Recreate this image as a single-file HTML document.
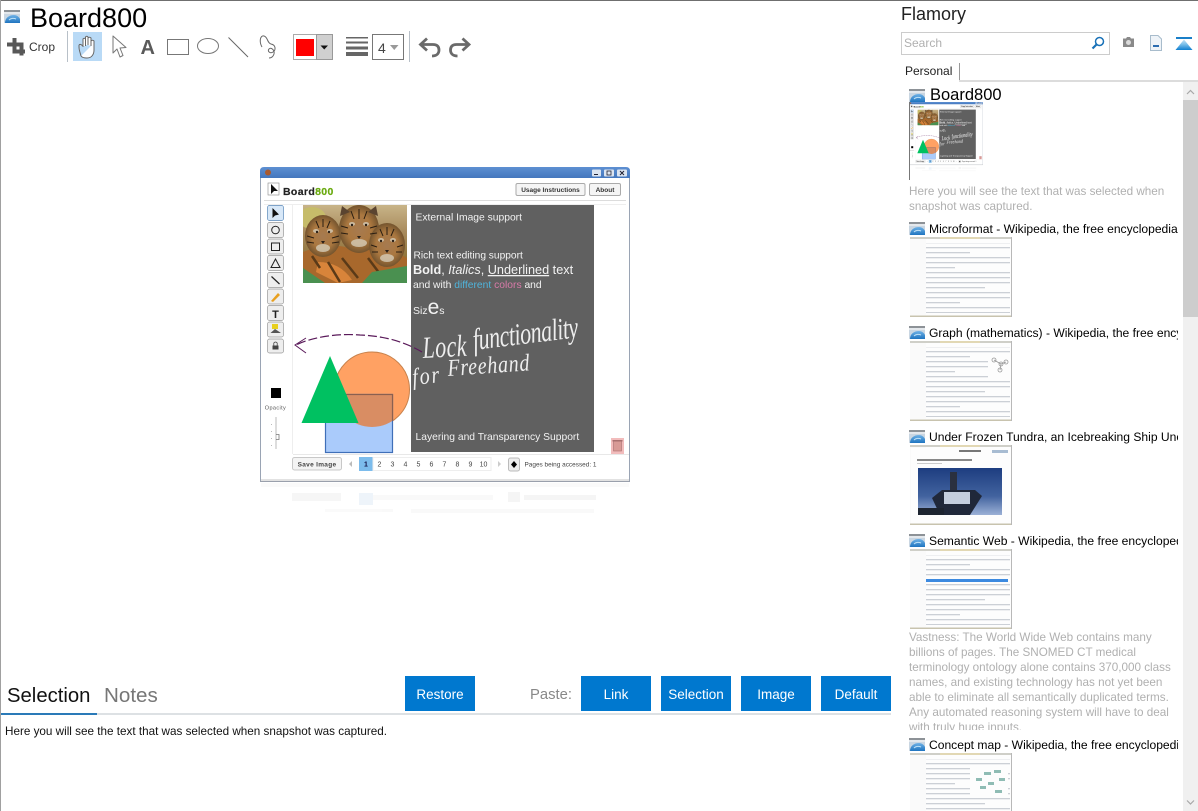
<!DOCTYPE html>
<html>
<head>
<meta charset="utf-8">
<title>Board800</title>
<style>
html,body{margin:0;padding:0;background:#fff;}
body{width:1198px;height:811px;position:relative;overflow:hidden;font-family:"Liberation Sans",sans-serif;color:#000;}
.a{position:absolute;white-space:nowrap;}
.btn{position:absolute;top:676px;width:70px;height:35px;background:#0078cf;color:#fff;font-size:13.5px;line-height:37px;text-align:center;}
.tt{position:absolute;left:929px;width:249px;overflow:hidden;white-space:nowrap;font-size:12.1px;line-height:16px;height:16px;color:#000;}
svg{position:absolute;left:0;top:0;}
</style>
</head>
<body>
<svg width="1198" height="811" viewBox="0 0 1198 811" xmlns="http://www.w3.org/2000/svg" font-family="Liberation Sans, sans-serif">
<defs>
<linearGradient id="icb" x1="0" y1="0" x2="0" y2="1"><stop offset="0" stop-color="#6fb2e6"/><stop offset="1" stop-color="#1f74c0"/></linearGradient>
<symbol id="ic" viewBox="0 0 16 14" overflow="visible">
  <rect x="0" y="0" width="16" height="13" fill="#c9d6e2"/>
  <rect x="0" y="0" width="16" height="2" fill="#8d9297"/>
  <rect x="0" y="2" width="16" height="2" fill="#e4e8ec"/>
  <path d="M1 13 C1 8 5 5 10 5 C13 5 15 7 16 9 V13 Z" fill="url(#icb)"/>
  <path d="M5 10 C7 8 10 8 12 9" stroke="#bfe2f8" stroke-width="1" fill="none"/>
</symbol>
<linearGradient id="tb" x1="0" y1="0" x2="0" y2="1"><stop offset="0" stop-color="#5d8fd2"/><stop offset="1" stop-color="#4477bd"/></linearGradient>
<linearGradient id="tg" x1="0" y1="0" x2="0" y2="1"><stop offset="0" stop-color="#c8b488"/><stop offset=".35" stop-color="#a88a5c"/><stop offset=".75" stop-color="#8a7034"/><stop offset="1" stop-color="#4b8a4a"/></linearGradient>
<radialGradient id="face"><stop offset="0" stop-color="#a67a50"/><stop offset=".6" stop-color="#ab7840"/><stop offset="1" stop-color="#74542e"/></radialGradient>
<linearGradient id="sk" x1="0" y1="0" x2="0" y2="1"><stop offset="0" stop-color="#1d3d80"/><stop offset=".6" stop-color="#42639f"/><stop offset="1" stop-color="#9bb0d6"/></linearGradient>
<linearGradient id="up" x1="0" y1="0" x2="0" y2="1"><stop offset="0" stop-color="#c8e4f6"/><stop offset=".45" stop-color="#7cc0ea"/><stop offset="1" stop-color="#0f7fd0"/></linearGradient>
<clipPath id="cc"><circle cx="372" cy="389.5" r="37.5"/></clipPath>
<clipPath id="tc"><rect x="303" y="205" width="104" height="78"/></clipPath>
<pattern id="ln" width="84" height="5" patternUnits="userSpaceOnUse"><rect width="84" height="1" fill="#ccd0d6"/><rect y="1" width="84" height="1" fill="#eeeff1"/></pattern>

<symbol id="wk" viewBox="0 0 102 80" overflow="hidden">
  <rect width="102" height="80" fill="#fdfdfd"/>
  <rect width="102" height="2" fill="#cfcfc8"/>
  <rect x="30" y="0" width="40" height="2" fill="#e2d8b4"/>
  <rect x="0" y="2" width="16" height="76" fill="#fafafa"/>
  <rect x="0" y="78.500" width="102" height="1.500" fill="#c8c3ae"/>
  <rect x="101" y="0" width="1" height="80" fill="#b8b8b8"/>
  <rect x="16" y="6" width="84" height="70" fill="url(#ln)"/>
  <rect x="60" y="14" width="40" height="6" fill="#fdfdfd"/>
  <rect x="45" y="29" width="55" height="6" fill="#fdfdfd"/>
  <rect x="75" y="49" width="25" height="6" fill="#fdfdfd"/>
  <rect x="50" y="64" width="50" height="6" fill="#fdfdfd"/>
</symbol>

<g id="shot">
  <rect x="260" y="167" width="370" height="316" fill="#fff"/>
  <path d="M260 178 V171 Q260 167 264 167 H626 Q630 167 630 171 V178 Z" fill="url(#tb)"/>
  <rect x="260" y="178" width="1" height="304" fill="#9aa4b4"/>
  <rect x="629" y="178" width="1" height="304" fill="#9aa4b4"/>
  <rect x="261" y="479" width="368" height="2" fill="#e2e2e2"/>
  <rect x="260" y="481" width="370" height="1" fill="#9aa0ac"/>
  <circle cx="268" cy="172.5" r="3" fill="#a85a30"/>
  <rect x="592" y="169.500" width="9" height="7" rx="1" fill="#dbe4f0"/><rect x="594" y="174" width="4" height="1" fill="#223"/>
  <rect x="604" y="169.500" width="10" height="7" rx="1" fill="#dbe4f0"/><rect x="607" y="171" width="4" height="4" fill="none" stroke="#223" stroke-width=".8"/>
  <rect x="617" y="169.500" width="10" height="7" rx="1" fill="#dbe4f0"/><path d="M620 171 L624 175 M624 171 L620 175" stroke="#223"/>
  <rect x="268" y="183" width="11" height="12" fill="#fff" stroke="#888" stroke-width=".6"/>
  <path d="M271 184 V194 L274 191 L278 191 Z" fill="#111"/>
  <text x="283" y="195" font-size="10.500" font-weight="bold" fill="#222" stroke="#222" stroke-width=".2" letter-spacing=".35">Board<tspan fill="#6aaa10" stroke="#6aaa10">800</tspan></text>
  <rect x="516" y="183.500" width="69" height="12" rx="1.500" fill="#f5f5f5" stroke="#aaa"/>
  <text x="550.500" y="192" font-size="6.500" font-weight="bold" text-anchor="middle" fill="#333">Usage Instructions</text>
  <rect x="589.500" y="183.500" width="31" height="12" rx="1.500" fill="#f5f5f5" stroke="#aaa"/>
  <text x="605" y="192" font-size="6.500" font-weight="bold" text-anchor="middle" fill="#333">About</text>
  <rect x="264" y="200" width="362" height="1" fill="#dcdcdc"/>
  <rect x="264" y="204" width="362" height="1" fill="#eeeeee"/>
  <rect x="292" y="204" width="1" height="250" fill="#eee"/>
  <g fill="#eeeeee" stroke="#999" stroke-width=".7">
    <rect x="267.500" y="205.500" width="16" height="15" rx="2" fill="#d8e8f8" stroke="#5a88b8"/>
    <rect x="267.500" y="222.500" width="16" height="15" rx="2"/>
    <rect x="267.500" y="239" width="16" height="15" rx="2"/>
    <rect x="267.500" y="255.500" width="16" height="15" rx="2"/>
    <rect x="267.500" y="272.500" width="16" height="15" rx="2"/>
    <rect x="267.500" y="289" width="16" height="15" rx="2"/>
    <rect x="267.500" y="305.500" width="16" height="15" rx="2"/>
    <rect x="267.500" y="322" width="16" height="15" rx="2"/>
    <rect x="267.500" y="339" width="16" height="14" rx="2"/>
  </g>
  <path d="M272.500 208 V218 L275 215.500 L279 214.500 Z" fill="#111"/>
  <circle cx="275.500" cy="230" r="3.800" fill="none" stroke="#222"/>
  <rect x="271.500" y="243" width="8" height="7.500" fill="none" stroke="#222"/>
  <path d="M275.500 259 L280 267.500 H271 Z" fill="none" stroke="#222"/>
  <path d="M271.500 276.500 L279.500 284" stroke="#222" stroke-width="1.200"/>
  <path d="M271 301 L278 293 L280 295 L273 302 Z" fill="#e8a020"/>
  <text x="275.500" y="318" font-size="11" font-weight="bold" text-anchor="middle" fill="#222">T</text>
  <rect x="272" y="324" width="6" height="5" fill="#e8d020"/><path d="M270.500 333 L275 329 L281 333 Z" fill="#555"/>
  <path d="M272.500 349.500 V345.500 H278.500 V349.500 Z" fill="#444"/><path d="M273.800 345.500 V343 Q275.500 341 277.200 343 V345.500" fill="none" stroke="#444" stroke-width=".8"/>

  <!-- tiger picture -->
  <g clip-path="url(#tc)">
    <rect x="303" y="205" width="104" height="78" fill="url(#tg)"/>
    <ellipse cx="312" cy="218" rx="14" ry="11" fill="#c6bc6a"/>
    <path d="M303 252 Q330 240 355 250 Q385 245 407 258 V283 H303 Z" fill="#a8682c"/>
    <path d="M318 262 Q340 262 352 280 L338 283 L316 272 Z" fill="#d8843a"/>
    <path d="M328 262 L340 282 M342 258 L358 278 M368 258 L380 274 M312 256 L320 268" stroke="#5a3a18" stroke-width="2.500"/>
    <path d="M303 268 L325 283 H303 Z M372 272 L407 266 V283 H362 Z" fill="#4a9050"/>
    <ellipse cx="323" cy="236" rx="18" ry="21" fill="url(#face)"/>
    <ellipse cx="359" cy="229" rx="20" ry="24" fill="url(#face)"/>
    <ellipse cx="387" cy="245" rx="18" ry="22" fill="url(#face)"/>
    <g fill="#d8d2c0" opacity=".75">
      <ellipse cx="323" cy="248" rx="7" ry="4"/><ellipse cx="359" cy="243" rx="8" ry="4"/><ellipse cx="387" cy="258" rx="7" ry="4"/>
      <ellipse cx="316" cy="231" rx="3" ry="2"/><ellipse cx="330" cy="231" rx="3" ry="2"/><ellipse cx="352" cy="224" rx="3" ry="2"/><ellipse cx="366" cy="224" rx="3" ry="2"/><ellipse cx="381" cy="240" rx="3" ry="2"/><ellipse cx="393" cy="240" rx="3" ry="2"/>
    </g>
    <g fill="#2a2018">
      <circle cx="317" cy="232" r="1.200"/><circle cx="329" cy="232" r="1.200"/><circle cx="352" cy="225" r="1.200"/><circle cx="366" cy="225" r="1.200"/><circle cx="381" cy="241" r="1.200"/><circle cx="393" cy="241" r="1.200"/>
      <path d="M321 241 h4 l-2 3 z M357 236 h4 l-2 3 z M385 250 h4 l-2 3 z"/>
    </g>
    <g stroke="#2a1e12" stroke-width="1" fill="none">
      <path d="M323 219 V227 M316 221 L319 228 M330 221 L327 228 M359 209 V219 M351 211 L354 219 M367 211 L364 219 M387 227 V235 M380 229 L383 236 M394 229 L391 236"/>
      <path d="M307 236 L314 238 M307 242 L314 243 M339 236 L332 238 M339 242 L332 243 M341 226 L348 228 M341 233 L348 234 M377 226 L370 228 M377 233 L370 234 M371 245 L377 247 M403 245 L397 247 M372 252 L378 252 M402 252 L396 252"/>
    </g>
    <path d="M342 206 L350 212 L340 216 Z M376 206 L368 212 L378 216 Z" fill="#5a4430"/>
  </g>

  <!-- dark panel -->
  <rect x="411" y="205" width="183" height="247" fill="#606060"/>
  <g fill="#f2f2f2">
    <text x="415.500" y="220.500" font-size="10.300">External Image support</text>
    <text x="413.500" y="258.500" font-size="10.200">Rich text editing support</text>
    <text x="413" y="274" font-size="12.700"><tspan font-weight="bold">Bold</tspan>, <tspan font-style="italic">Italics</tspan>, <tspan text-decoration="underline">Underlined</tspan> text</text>
    <text x="413" y="288" font-size="10.300">and with <tspan fill="#4fb4dc">different</tspan> <tspan fill="#d87aa8">colors</tspan> and</text>
    <text x="413" y="314" font-size="10.500">Siz<tspan font-size="21">e</tspan>s</text>
    <text x="415.500" y="440" font-size="10.300">Layering and Transparency Support</text>
    <g font-family="Liberation Serif, serif" font-style="italic" fill="#eeeeee">
      <text transform="translate(423 358) rotate(-3) scale(1 1.400)" font-size="22" textLength="44" lengthAdjust="spacing">Lock</text>
      <text transform="translate(474 350) rotate(-7) scale(1 1.400)" font-size="22" textLength="106" lengthAdjust="spacing">functionality</text>
      <text transform="translate(413 385) rotate(-6) scale(1 1.200)" font-size="20" textLength="27" lengthAdjust="spacing">for</text>
      <text transform="translate(448 376) rotate(-4) scale(1 1.200)" font-size="20" textLength="82" lengthAdjust="spacing">Freehand</text>
    </g>
  </g>

  <!-- arrow -->
  <path d="M422 352 C405 342 385 336 360 335 C335 333 310 338 296 345" fill="none" stroke="#5a1a5a" stroke-width="1.200" stroke-dasharray="9 3"/>
  <path d="M306 338 L295 345 L306 353" fill="none" stroke="#5a1a5a" stroke-width="1"/>

  <!-- shapes -->
  <circle cx="372" cy="389.500" r="37.500" fill="#ffa163" stroke="#c8824c"/>
  <rect x="325.500" y="394.500" width="67" height="58" fill="#aacbfb" stroke="#3f6fb8" stroke-width="1.200"/>
  <g clip-path="url(#cc)"><rect x="325.500" y="394.500" width="67" height="58" fill="#d98d63" stroke="#8a6050" stroke-width="1.200"/></g>
  <path d="M330 356 L358.500 423 H301.500 Z" fill="#00c161"/>

  <!-- left lower -->
  <rect x="271" y="388" width="10" height="10" fill="#000"/>
  <text x="275.500" y="409.500" font-size="5.500" text-anchor="middle" fill="#555" letter-spacing=".4">Opacity</text>
  <rect x="275.500" y="417" width="1" height="32" fill="#bbb"/>
  <rect x="271" y="424" width="1" height="1" fill="#bbb"/><rect x="271" y="431" width="1" height="1" fill="#bbb"/><rect x="271" y="438" width="1" height="1" fill="#bbb"/><rect x="271" y="445" width="1" height="1" fill="#bbb"/>
  <path d="M276 434.500 h3 v5 h-3" fill="none" stroke="#777" stroke-width=".8"/>
  <!-- trash -->
  <rect x="611" y="438" width="13" height="16" fill="#f2bcbc"/>
  <rect x="613.500" y="441" width="8" height="10" fill="#d89a96" stroke="#a87070" stroke-width=".6"/>
  <rect x="612.500" y="440" width="10" height="1.500" fill="#a87070"/>
  <rect x="293" y="454" width="336" height="1" fill="#e8e8e8"/>
  <!-- bottom nav -->
  <rect x="292.500" y="457.500" width="49" height="12.500" rx="2" fill="#f4f4f4" stroke="#c8c8c8"/>
  <text x="317" y="466.500" font-size="6.500" font-weight="bold" text-anchor="middle" fill="#444" letter-spacing=".3">Save Image</text>
  <path d="M352 461 L349 464 L352 467 Z" fill="#bbb"/>
  <rect x="359" y="457" width="14" height="14" fill="#7cbcec"/>
  <g font-size="7" text-anchor="middle" fill="#444">
    <text x="366" y="466.500" fill="#114" font-weight="bold">1</text><text x="379.500" y="466.500">2</text><text x="392.500" y="466.500">3</text><text x="405.500" y="466.500">4</text><text x="418.500" y="466.500">5</text><text x="431.500" y="466.500">6</text><text x="444.500" y="466.500">7</text><text x="457.500" y="466.500">8</text><text x="470.500" y="466.500">9</text><text x="483.500" y="466.500">10</text>
  </g>
  <rect x="373" y="457.500" width="118" height="13" fill="none" stroke="#eee"/>
  <path d="M498 461 L501 464 L498 467 Z" fill="#ccc"/>
  <rect x="508.500" y="458" width="11" height="13" rx="2" fill="#eee" stroke="#bbb"/>
  <path d="M514 461 L517 464.500 L514 468 L511 464.500 Z" fill="#000"/>
  <text x="524.500" y="466.500" font-size="6.800" fill="#444" textLength="72" lengthAdjust="spacingAndGlyphs">Pages being accessed: 1</text>
  <!-- reflection -->
  <g opacity=".35">
    <rect x="261" y="483" width="368" height="4" fill="#f3f3f3"/>
    <rect x="292" y="493" width="49" height="8" fill="#e8e8e8"/>
    <rect x="359" y="493" width="14" height="12" fill="#cfe0f2"/>
    <rect x="373" y="495" width="120" height="5" fill="#eeeeee"/>
    <rect x="508" y="492" width="12" height="10" fill="#e4e4e4"/>
    <rect x="524" y="495" width="72" height="5" fill="#e4e4e4"/>
    <rect x="325" y="509" width="68" height="3" fill="#f0f0f0"/>
    <rect x="411" y="509" width="183" height="4" fill="#eeeeee"/>
  </g>
</g>
</defs>

<use href="#shot"/>

<!-- frame -->
<rect x="0" y="0" width="1198" height="1" fill="#6f6f6f"/>
<rect x="0" y="0" width="1" height="811" fill="#a0a0a0"/>

<!-- title icon -->
<use href="#ic" x="4" y="10" width="16" height="14"/>

<!-- toolbar -->
<path d="M7 44.500 H21.500 V55.500 M14.500 38 V51.500 H25" fill="none" stroke="#585858" stroke-width="4"/>
<rect x="67" y="31" width="1" height="31" fill="#b8c0c8"/>
<rect x="73" y="32" width="29" height="29" fill="#b9daf6"/>
<path d="M81 56 C80 52 79 50 79 47 V45 M83 46 V39 Q84.300 37.500 85.500 39 V46 M85.500 45 V37 Q87 35.500 88 37 V45 M88 45 V38 Q89.500 36.500 91 38 V46 M91 46 V41 Q92.500 39.500 94 41 V50 C94 54 92 58 87 58 C84 58 82 57.500 81 56 M83 46 V47 M79 45 Q80 43.500 83 46" fill="#fdfeff" stroke="#666" stroke-width="1" stroke-linejoin="round"/>
<path d="M113 36 V53 L117 49 L120 57 L123 55.500 L120 48 L126 47.500 Z" fill="#fff" stroke="#777" stroke-width="1" stroke-linejoin="round"/>
<text x="140.500" y="54" font-size="20" font-weight="bold" fill="#5a5a5a">A</text>
<rect x="167.500" y="39.500" width="21" height="15" fill="#fff" stroke="#777"/>
<ellipse cx="208" cy="46" rx="10.500" ry="7.500" fill="#fff" stroke="#777"/>
<path d="M228.500 37.500 L248 57" stroke="#666" stroke-width="1"/>
<path d="M262 47 C259 42 260 35 264 36 C268 37 267 43 271 44 C276 45 276 50 273 52 C270 54 267 51 269 49 C271 47 275 50 274 54 C273 57 271 58 269 58" fill="none" stroke="#666" stroke-width="1"/>
<rect x="293.500" y="34.500" width="39" height="25" fill="#fff" stroke="#aaa"/>
<rect x="296" y="39" width="18" height="17" fill="#f00"/>
<rect x="316.500" y="34.500" width="16" height="25" fill="#d0d0d0" stroke="#999"/>
<path d="M320.500 45.500 H328 L324.250 49.500 Z" fill="#111"/>
<rect x="346" y="37" width="22" height="1.500" fill="#666"/>
<rect x="346" y="41.500" width="22" height="2" fill="#666"/>
<rect x="346" y="46.500" width="22" height="3" fill="#666"/>
<rect x="346" y="52" width="22" height="4" fill="#666"/>
<rect x="372.500" y="34.500" width="31" height="25" fill="#fff" stroke="#777"/>
<text x="378" y="53" font-size="14" fill="#444">4</text>
<path d="M390 45 H398.500 L394.250 50 Z" fill="#999"/>
<rect x="409" y="31" width="1" height="31" fill="#b8c0c8"/>
<path d="M427 38.500 L420.500 44.500 L427 50.500 M421.500 44.500 H433 C437.500 44.500 439 47 439 50 C439 53.500 436.500 56 432 56" fill="none" stroke="#6a6a6a" stroke-width="2.800"/>
<path d="M462.500 38.500 L469 44.500 L462.500 50.500 M468 44.500 H456.500 C452 44.500 450.500 47 450.500 50 C450.500 53.500 453 56 457.500 56" fill="none" stroke="#6a6a6a" stroke-width="2.800"/>

<!-- sidebar top -->
<rect x="901.500" y="32.500" width="208" height="22" fill="#fff" stroke="#ccc"/>
<circle cx="1099.500" cy="41.500" r="4" fill="none" stroke="#1a72b8" stroke-width="1.500"/>
<path d="M1096.500 44.500 L1092.500 48.500" stroke="#1a72b8" stroke-width="2.200"/>
<path d="M1123 38.500 H1126 L1127 37 H1130 L1131 38.500 H1134 V47 H1123 Z" fill="#8a8a8a"/>
<circle cx="1128.500" cy="42.500" r="2.500" fill="#dcdcdc"/>
<path d="M1150.500 35.500 H1158 L1161.500 39 V50.500 H1150.500 Z" fill="#eef3f8" stroke="#a8bccc"/>
<rect x="1153" y="45" width="6" height="2" fill="#2c6cb0"/>
<rect x="1176" y="37" width="16" height="2" fill="#1a7fc8"/>
<path d="M1184 39.500 L1192.500 50 H1175.500 Z" fill="url(#up)"/>
<rect x="959" y="63" width="1" height="18" fill="#999"/>
<rect x="959" y="80" width="239" height="2" fill="#dcdcdc"/>

<!-- scrollbar -->
<rect x="1183" y="82" width="15" height="729" fill="#f0f0f0"/>
<rect x="1183" y="100" width="15" height="217" fill="#cdcdcd"/>
<path d="M1187 94 L1190.500 90.500 L1194 94" fill="none" stroke="#a8a8a8" stroke-width="1.200"/>
<path d="M1187 800.500 L1190.500 804 L1194 800.500" fill="none" stroke="#a8a8a8" stroke-width="1.200"/>

<!-- sidebar icons -->
<use href="#ic" x="909" y="89" width="16" height="14"/>
<use href="#ic" x="909" y="222" width="16" height="14"/>
<use href="#ic" x="909" y="326" width="16" height="14"/>
<use href="#ic" x="909" y="430" width="16" height="14"/>
<use href="#ic" x="909" y="534" width="16" height="14"/>
<use href="#ic" x="909" y="738" width="16" height="14"/>

<!-- thumb 1 -->
<svg x="909" y="102" width="74" height="78" viewBox="260 167 370 390"><use href="#shot"/></svg>
<rect x="909" y="102" width="1" height="78" fill="#777"/>

<!-- wiki thumbs -->
<use href="#wk" x="910" y="237" width="102" height="80"/>

<use href="#wk" x="910" y="341" width="102" height="80"/>
<rect x="988" y="354" width="22" height="24" fill="#fdfdfd"/>
<g fill="none" stroke="#999" stroke-width=".8"><circle cx="994" cy="360" r="2"/><circle cx="1001" cy="364" r="2"/><circle cx="1006" cy="362" r="2"/><circle cx="1000" cy="370" r="2"/><path d="M994 360 L1001 364 L1006 362 M1001 364 L1000 370"/></g>

<use href="#wk" x="910" y="445" width="102" height="80"/>
<rect x="911" y="448" width="100" height="75" fill="#fdfdfd"/>
<rect x="959" y="450" width="22" height="2" fill="#777"/>
<rect x="992" y="450" width="16" height="3" fill="#a8bcd2"/>
<rect x="917" y="459" width="55" height="2" fill="#888"/>
<rect x="917" y="463" width="25" height="1" fill="#ccc"/>
<rect x="918" y="468" width="84" height="47" fill="url(#sk)"/>
<path d="M950 472 H957 V492 H950 Z" fill="#2a3040"/>
<path d="M932 498 L942 490 H975 L982 496 L970 515 H940 Z" fill="#20283a"/>
<rect x="944" y="492" width="26" height="12" fill="#c4cede"/>
<rect x="918" y="508" width="26" height="7" fill="#1d2430"/>

<use href="#wk" x="910" y="549" width="102" height="80"/>
<rect x="926" y="579" width="82" height="3" fill="#3c8ae0"/>

<use href="#wk" x="910" y="753" width="102" height="80"/>
<rect x="970" y="765" width="38" height="32" fill="#fdfdfd"/>
<g fill="#8fbcb4"><rect x="976" y="778" width="6" height="3"/><rect x="984" y="772" width="7" height="3"/><rect x="994" y="770" width="7" height="3"/><rect x="988" y="782" width="6" height="3"/><rect x="999" y="778" width="6" height="3"/><rect x="980" y="786" width="6" height="3"/><rect x="995" y="790" width="7" height="3"/></g>

<!-- bottom tab lines -->
<rect x="1" y="713" width="890" height="2" fill="#dde1e4"/>
<rect x="1" y="713" width="96" height="2" fill="#2a7ab8"/>
</svg>

<div class="a" style="left:30px;top:3px;font-size:27px;line-height:31px;">Board800</div>
<div class="a" style="left:29px;top:40px;font-size:12px;line-height:14px;color:#333;">Crop</div>

<div class="a" style="left:901px;top:3px;font-size:18px;line-height:22px;color:#222;">Flamory</div>
<div class="a" style="left:904px;top:36px;font-size:12px;line-height:14px;color:#b0b0b0;">Search</div>
<div class="a" style="left:905px;top:64px;font-size:12px;line-height:14px;color:#222;">Personal</div>

<div class="a" style="left:930px;top:86px;font-size:16.500px;line-height:19px;">Board800</div>
<div class="a" style="left:909px;top:184px;font-size:11.700px;line-height:15px;color:#b0b0b0;">Here you will see the text that was selected when<br>snapshot was captured.</div>

<div class="tt" style="top:221px;">Microformat - Wikipedia, the free encyclopedia</div>
<div class="tt" style="top:325px;">Graph (mathematics) - Wikipedia, the free encyclopedia</div>
<div class="tt" style="top:429px;">Under Frozen Tundra, an Icebreaking Ship Uncovers the Future</div>
<div class="tt" style="top:533px;">Semantic Web - Wikipedia, the free encyclopedia</div>
<div class="tt" style="top:737px;">Concept map - Wikipedia, the free encyclopedia</div>

<div class="a" style="left:909px;top:630px;width:270px;height:100px;overflow:hidden;font-size:11.700px;line-height:15px;color:#b0b0b0;">Vastness: The World Wide Web contains many<br>billions of pages. The SNOMED CT medical<br>terminology ontology alone contains 370,000 class<br>names, and existing technology has not yet been<br>able to eliminate all semantically duplicated terms.<br>Any automated reasoning system will have to deal<br>with truly huge inputs.</div>

<div class="a" style="left:7px;top:684px;font-size:20.300px;line-height:24px;color:#111;">Selection</div>
<div class="a" style="left:104px;top:684px;font-size:20.600px;line-height:24px;color:#777;">Notes</div>
<div class="a" style="left:530px;top:686px;font-size:14.800px;line-height:18px;color:#888;">Paste:</div>
<div class="btn" style="left:405px;">Restore</div>
<div class="btn" style="left:581px;">Link</div>
<div class="btn" style="left:661px;">Selection</div>
<div class="btn" style="left:741px;">Image</div>
<div class="btn" style="left:821px;">Default</div>
<div class="a" style="left:5px;top:724px;font-size:11.700px;line-height:15px;color:#111;">Here you will see the text that was selected when snapshot was captured.</div>
</body>
</html>
